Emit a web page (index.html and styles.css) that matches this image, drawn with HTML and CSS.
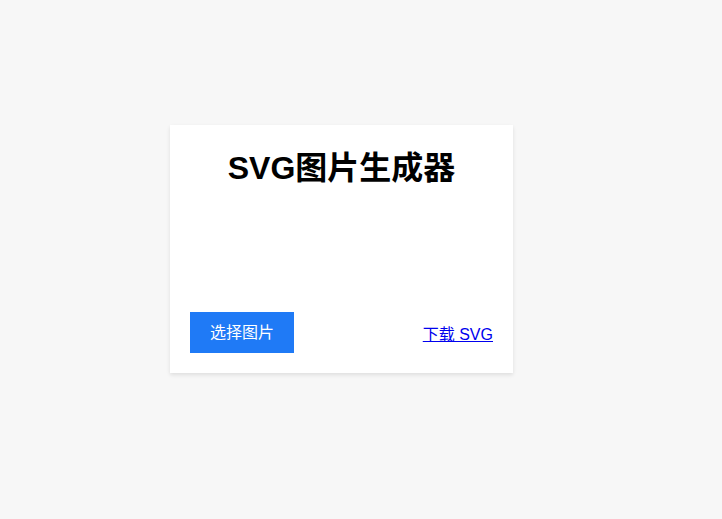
FILE: index.html
```html
<!DOCTYPE html>
<html lang="zh">
<head>
<meta charset="utf-8">
<title>SVG图片生成器</title>
<link rel="stylesheet" href="styles.css">
</head>
<body>
<div class="card">
  <h1 class="title">SVG图片生成器</h1>
  <div class="preview"></div>
  <div class="actions">
    <button class="pick" type="button">选择图片</button>
    <a class="download" href="#">下载 SVG</a>
  </div>
</div>
</body>
</html>
```
FILE: styles.css
```css
html, body {
  margin: 0;
  padding: 0;
}
body {
  background: #f7f7f7;
  font-family: "Liberation Sans", Arial, "Noto Sans CJK SC", sans-serif;
  padding: 125px 0 0 170px;
  min-height: 100vh;
  box-sizing: border-box;
}
.card {
  width: 343px;
  box-sizing: border-box;
  background: #fff;
  padding: 20px;
  box-shadow: 0 2px 4px rgba(0, 0, 0, 0.1);
}
.title {
  margin: 0;
  font-size: 32px;
  font-weight: bold;
  line-height: 46px;
  text-align: center;
  color: #000;
}
.preview {
  height: 121px;
}
.actions {
  display: flex;
  justify-content: space-between;
  align-items: center;
}
.pick {
  background: #1f7af6;
  color: #fff;
  border: none;
  font-family: inherit;
  font-size: 16px;
  line-height: 21px;
  padding: 10px 20px;
  margin: 0;
  cursor: pointer;
}
.download {
  font-size: 16px;
  color: #0000ee;
  text-decoration: underline;
}
```
